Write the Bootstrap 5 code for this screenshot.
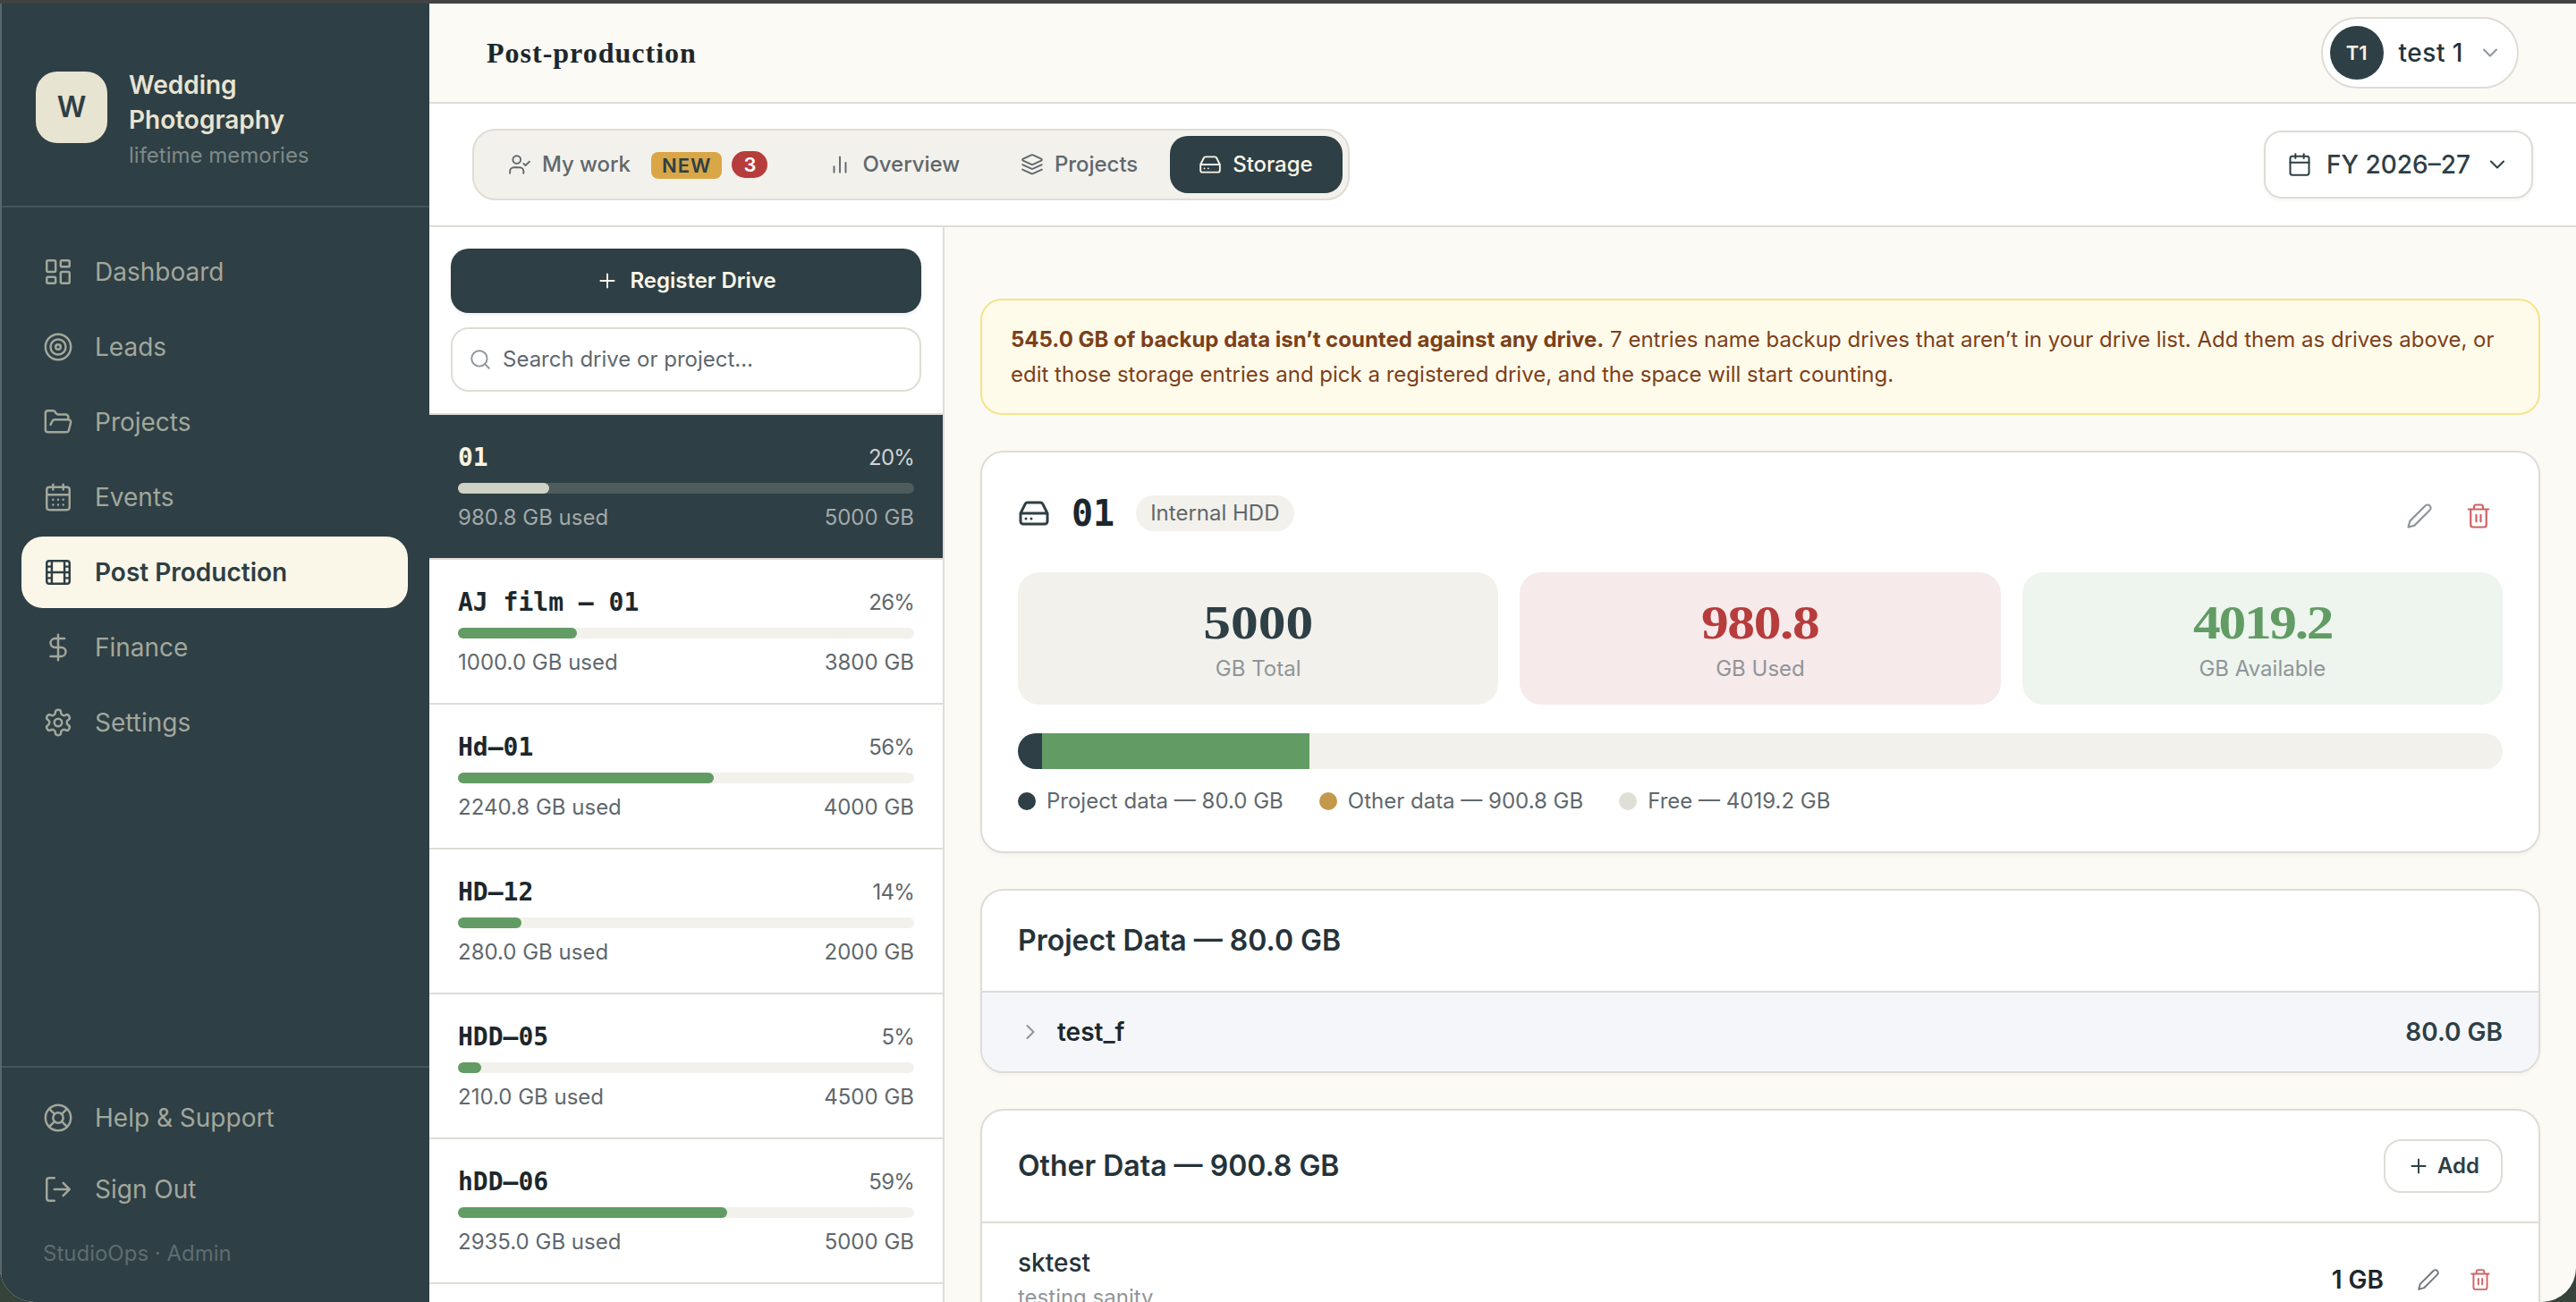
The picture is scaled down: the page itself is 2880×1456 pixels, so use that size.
<!DOCTYPE html>
<html lang="en">
<head>
  <meta charset="UTF-8">
  <title>Post-production</title>
  <link href="https://cdn.jsdelivr.net/npm/bootstrap@5.3.0/dist/css/bootstrap.min.css" rel="stylesheet" />
  <style>
    :root {
      --ink: #2e3f45;
      --line: #dfdcd6;
      --cream: #fbfaf5;
      --sand: #f3f1eb;
      --green: #629c64;
      --red: #b73c3c;
    }
    body { font-family: Inter, "Liberation Sans", sans-serif; font-size: 24px; line-height: 36px; color: #5f686d; background: #36433a; height: 1456px; overflow: hidden; }
    svg { fill: none; stroke: currentColor; stroke-width: 1.75; stroke-linecap: round; stroke-linejoin: round; flex: none; }
    .i26 { width: 26px; height: 26px; }
    .i28 { width: 28px; height: 28px; }
    .i30 { width: 30px; height: 30px; }
    .i34 { width: 34px; height: 34px; }
    .i36 { width: 36px; height: 36px; stroke-width: 2; }
    .window { height: 1456px; border-top: 4px solid #434343; border-radius: 0 0 38px 38px; background: var(--cream); }
    .mono { font-family: "DejaVu Sans Mono", monospace; font-weight: 700; }
    .serif { font-family: "Liberation Serif", serif; font-weight: 700; }
    .fs28 { font-size: 28px; }
    .tone-ink { color: var(--ink); }
    .tone-red { color: #cf6263; }

    /* sidebar */
    .side { width: 480px; background: var(--ink); border-left: 2px solid #5a686d; color: #a2a79c; }
    .brand { height: 228px; padding: 72px 38px 0; border-bottom: 2px solid #47565a; }
    .brand-logo { width: 80px; height: 80px; margin-top: 4px; border-radius: 24px; background: #e8e4d2; color: var(--ink); font-size: 32px; font-weight: 600; }
    .brand-name { font-size: 28px; line-height: 39px; font-weight: 600; color: #e8e4d2; }
    .brand-sub { color: #7f8a88; line-height: 39px; }
    .menu { padding: 32px 24px 0 22px; gap: 4px; }
    .menu a, .foot a { height: 80px; padding: 0 24px; gap: 24px; font-size: 28px; color: inherit; text-decoration: none; border-radius: 24px; }
    .menu a.active { background: #fbf7e8; color: var(--ink); font-weight: 600; }
    .foot { height: 264px; padding: 16px 22px 0; border-top: 2px solid #47565a; }
    .foot small { font-size: 24px; color: #5f6d6f; padding: 14px 24px 0; }

    /* top bar and tabs */
    .topbar { height: 112px; padding: 0 64px; border-bottom: 2px solid var(--line); }
    .page-title { font-size: 32px; letter-spacing: 1px; color: #1c272c; margin: 0; }
    .user { height: 80px; padding: 0 16px 0 8px; gap: 16px; border: 2px solid var(--line); border-radius: 40px; background: #fff; color: #8f9599; }
    .user b { width: 60px; height: 60px; border-radius: 50%; background: var(--ink); color: #fbf3e0; font-size: 22px; font-weight: 600; }
    .user-name { letter-spacing: .5px; padding-left: 1px; color: #25333a; }
    .tabs-row { height: 138px; padding: 0 48px; border-bottom: 2px solid var(--line); background: #fff; }
    .tabs { height: 80px; padding: 6px; gap: 4px; border: 2px solid var(--line); border-radius: 26px; background: var(--sand); }
    .tabs a { height: 64px; padding: 0 32px; gap: 12px; font-weight: 500; letter-spacing: -.05px; color: #5f686d; text-decoration: none; border-radius: 20px; }
    .tabs a.active { padding-right: 33px; background: var(--ink); color: #fbf7e8; }
    .tag-new, .tag-count { height: 30px; line-height: 30px; font-size: 22px; font-weight: 600; }
    .tag-new { margin: 2px 0 0 11px; padding: 0 12px; border-radius: 8px; background: #d9a648; color: var(--ink); letter-spacing: 1px; }
    .tag-count { width: 40px; margin-left: -1px; border-radius: 15px; background: var(--red); color: #fff; text-align: center; }
    .year { height: 76px; padding: 0 24px; gap: 16px; border: 2px solid var(--line); border-radius: 20px; background: #fff; color: var(--ink); font-size: 28px; font-weight: 500; box-shadow: 0 2px 4px rgba(0,0,0,.05); }

    /* drive list */
    .main-row { min-height: 0; }
    .drives { width: 576px; background: #fff; border-right: 2px solid var(--line); }
    .drives-top { padding: 24px; gap: 16px; border-bottom: 2px solid var(--line); }
    .register { height: 72px; gap: 12px; border: 0; border-radius: 20px; background: var(--ink); color: #fbf7e8; font-size: 24px; font-weight: 600; box-shadow: 0 2px 4px rgba(0,0,0,.08); }
    .search { height: 72px; padding: 0 18px; gap: 12px; border: 2px solid var(--line); border-radius: 20px; color: #8f9599; }
    .search-text { color: #5f686d; }
    .drive { height: 162px; padding: 28px 32px 0; border-bottom: 2px solid var(--line); }
    .drive .mono { font-size: 28px; line-height: 40px; color: #1c272c; }
    .pct { letter-spacing: -.8px; }
    .bar { height: 12px; margin: 8px 0 9px; border-radius: 6px; background: var(--sand); }
    .bar div { height: 12px; border-radius: 6px; background: var(--green); }
    .drive.active { background: var(--ink); color: #a2a9aa; }
    .drive.active .mono { color: #fbf3e0; }
    .drive.active .pct { color: #d0d3d2; }
    .drive.active .bar { background: #4e5c5d; }
    .drive.active .bar div { background: #cfd2c4; }

    /* selected drive */
    .content { padding: 80px 40px 0; gap: 40px; }
    .notice { padding: 24px 32px; border: 2px solid #f6e389; border-radius: 24px; background: #fffbeb; color: #7c4019; line-height: 39px; }
    .panel { border: 2px solid var(--line); border-radius: 26px; background: #fff; box-shadow: 0 2px 4px rgba(0,0,0,.04); overflow: hidden; flex: none; }
    .drive-panel { height: 450px; padding: 40px; }
    .drive-head { height: 94px; gap: 24px; }
    .drive-head > div { height: 56px; }
    .drive-title { font-size: 40px; color: #1c272c; }
    .kind { height: 40px; line-height: 40px; padding: 0 16px; border-radius: 20px; background: var(--sand); }
    .drive-head .tools-lg { height: 62px; padding: 0 12px; gap: 36px; color: #8f9599; }
    .tools-sm { gap: 32px; padding: 0 12px 0 37px; color: #6f777b; }
    .stats { grid-template-columns: repeat(3, 1fr); gap: 24px; }
    .stat { height: 148px; padding-top: 28px; border-radius: 24px; text-align: center; color: #8f9599; }
    .stat .serif { font-size: 53px; line-height: 56px; height: 62px; transform: scaleX(1.16); }
    .stat-total { background: var(--sand); }
    .stat-total .serif { color: var(--ink); }
    .stat-used { background: #f7eaea; }
    .stat-used .serif { color: var(--red); letter-spacing: -1.2px; }
    .stat-free { background: #edf5ee; }
    .stat-free .serif { color: var(--green); letter-spacing: -2px; }
    .usage { height: 40px; margin: 32px 0 18px; border-radius: 20px; background: var(--sand); overflow: hidden; }
    .legend { gap: 40px; }
    .legend i { width: 20px; height: 20px; border-radius: 50%; margin-right: 12px; }
    .use-project, .dot-project { background: var(--ink); }
    .use-other { background: var(--green); }
    .dot-other { background: #c39a4b; }
    .dot-free { background: #dfded7; }
    .panel h2 { margin: 0; font-size: 32px; font-weight: 600; color: #25333a; }
    .panel-head { padding: 0 40px; border-bottom: 2px solid var(--line); }
    .head-project { height: 114px; }
    .head-other { height: 126px; }
    .project-row { height: 88px; padding: 0 40px; gap: 16px; background: #f5f6f9; font-weight: 600; color: #8f9599; }
    .row-name { font-weight: 600; color: #1c272c; }
    .add { height: 60px; padding: 0 24px; gap: 8px; border: 2px solid var(--line); border-radius: 20px; background: #fff; color: var(--ink); font-weight: 600; }
    .other-row { padding: 24px 40px; }
    .other-name { font-weight: 500; line-height: 41px; color: #25333a; }
    .other-note { color: #8f9599; }
  </style>
</head>
<body>
  <svg class="d-none">
    <symbol id="grid" viewBox="0 0 24 24"><rect x="3" y="3" width="7" height="9" rx="1"/><rect x="14" y="3" width="7" height="5" rx="1"/><rect x="14" y="12" width="7" height="9" rx="1"/><rect x="3" y="16" width="7" height="5" rx="1"/></symbol>
    <symbol id="target" viewBox="0 0 24 24"><circle cx="12" cy="12" r="10"/><circle cx="12" cy="12" r="6"/><circle cx="12" cy="12" r="2"/></symbol>
    <symbol id="folder" viewBox="0 0 24 24"><path d="m6 14 1.5-2.9A2 2 0 0 1 9.24 10H20a2 2 0 0 1 1.94 2.5l-1.54 6a2 2 0 0 1-1.95 1.5H4a2 2 0 0 1-2-2V5a2 2 0 0 1 2-2h3.9a2 2 0 0 1 1.69.9l.81 1.2a2 2 0 0 0 1.67.9H18a2 2 0 0 1 2 2v2"/></symbol>
    <symbol id="days" viewBox="0 0 24 24"><path d="M8 2v4M16 2v4M3 10h18M8 14h.01M12 14h.01M16 14h.01M8 18h.01M12 18h.01M16 18h.01"/><rect x="3" y="4" width="18" height="18" rx="2"/></symbol>
    <symbol id="film" viewBox="0 0 24 24"><rect x="3" y="3" width="18" height="18" rx="2"/><path d="M7 3v18M17 3v18M3 7.5h4M3 12h18M3 16.5h4M17 7.5h4M17 16.5h4"/></symbol>
    <symbol id="dollar" viewBox="0 0 24 24"><path d="M12 2v20M17 5H9.5a3.5 3.5 0 0 0 0 7h5a3.5 3.5 0 0 1 0 7H6"/></symbol>
    <symbol id="gear" viewBox="0 0 24 24"><path d="M12.22 2h-.44a2 2 0 0 0-2 2v.18a2 2 0 0 1-1 1.73l-.43.25a2 2 0 0 1-2 0l-.15-.08a2 2 0 0 0-2.73.73l-.22.38a2 2 0 0 0 .73 2.73l.15.1a2 2 0 0 1 1 1.72v.51a2 2 0 0 1-1 1.74l-.15.09a2 2 0 0 0-.73 2.73l.22.38a2 2 0 0 0 2.73.73l.15-.08a2 2 0 0 1 2 0l.43.25a2 2 0 0 1 1 1.73V20a2 2 0 0 0 2 2h.44a2 2 0 0 0 2-2v-.18a2 2 0 0 1 1-1.73l.43-.25a2 2 0 0 1 2 0l.15.08a2 2 0 0 0 2.73-.73l.22-.39a2 2 0 0 0-.73-2.73l-.15-.08a2 2 0 0 1-1-1.74v-.5a2 2 0 0 1 1-1.74l.15-.09a2 2 0 0 0 .73-2.73l-.22-.38a2 2 0 0 0-2.73-.73l-.15.08a2 2 0 0 1-2 0l-.43-.25a2 2 0 0 1-1-1.73V4a2 2 0 0 0-2-2z"/><circle cx="12" cy="12" r="3"/></symbol>
    <symbol id="buoy" viewBox="0 0 24 24"><circle cx="12" cy="12" r="10"/><circle cx="12" cy="12" r="4"/><path d="m4.93 4.93 4.24 4.24M14.83 9.17l4.24-4.24M14.83 14.83l4.24 4.24M9.17 14.83l-4.24 4.24"/></symbol>
    <symbol id="logout" viewBox="0 0 24 24"><path d="M9 21H5a2 2 0 0 1-2-2V5a2 2 0 0 1 2-2h4M16 17l5-5-5-5M21 12H9"/></symbol>
    <symbol id="user" viewBox="0 0 24 24"><path d="M16 21v-2a4 4 0 0 0-4-4H6a4 4 0 0 0-4 4v2"/><circle cx="9" cy="7" r="4"/><path d="m16 11 2 2 4-4"/></symbol>
    <symbol id="chart" viewBox="0 0 24 24"><path d="M18 20V10M12 20V4M6 20v-6"/></symbol>
    <symbol id="layers" viewBox="0 0 24 24"><path d="m12.83 2.18a2 2 0 0 0-1.66 0L2.6 6.08a1 1 0 0 0 0 1.83l8.58 3.91a2 2 0 0 0 1.66 0l8.58-3.9a1 1 0 0 0 0-1.83ZM22 12.15l-9.17 4.17a2 2 0 0 1-1.66 0L2 12.15M22 17.15l-9.17 4.17a2 2 0 0 1-1.66 0L2 17.15"/></symbol>
    <symbol id="hdd" viewBox="0 0 24 24"><path d="M22 12H2M5.45 5.11 2 12v6a2 2 0 0 0 2 2h16a2 2 0 0 0 2-2v-6l-3.45-6.89A2 2 0 0 0 16.76 4H7.24a2 2 0 0 0-1.79 1.11zM6 16h.01M10 16h.01"/></symbol>
    <symbol id="cal" viewBox="0 0 24 24"><path d="M8 2v4M16 2v4M3 10h18"/><rect x="3" y="4" width="18" height="18" rx="2"/></symbol>
    <symbol id="down" viewBox="0 0 24 24"><path d="m6 9 6 6 6-6"/></symbol>
    <symbol id="right" viewBox="0 0 24 24"><path d="m9 18 6-6-6-6"/></symbol>
    <symbol id="plus" viewBox="0 0 24 24"><path d="M5 12h14M12 5v14"/></symbol>
    <symbol id="find" viewBox="0 0 24 24"><circle cx="11" cy="11" r="8"/><path d="m21 21-4.3-4.3"/></symbol>
    <symbol id="pencil" viewBox="0 0 24 24"><path d="M17 3a2.85 2.83 0 1 1 4 4L7.5 20.5 2 22l1.5-5.5Z"/></symbol>
    <symbol id="trash" viewBox="0 0 24 24"><path d="M3 6h18M19 6v14a2 2 0 0 1-2 2H7a2 2 0 0 1-2-2V6M8 6V4a2 2 0 0 1 2-2h4a2 2 0 0 1 2 2v2M10 11v6M14 11v6"/></symbol>
  </svg>

  <div class="window d-flex overflow-hidden">
    <aside class="side d-flex flex-column flex-shrink-0">
      <div class="brand d-flex gap-4">
        <div class="brand-logo d-flex align-items-center justify-content-center">W</div>
        <div>
          <div class="brand-name">Wedding<br>Photography</div>
          <div class="brand-sub">lifetime memories</div>
        </div>
      </div>
      <nav class="menu d-flex flex-column flex-grow-1">
        <a href="#" class="d-flex align-items-center"><svg class="i34"><use href="#grid"/></svg>Dashboard</a>
        <a href="#" class="d-flex align-items-center"><svg class="i34"><use href="#target"/></svg>Leads</a>
        <a href="#" class="d-flex align-items-center"><svg class="i34"><use href="#folder"/></svg>Projects</a>
        <a href="#" class="d-flex align-items-center"><svg class="i34"><use href="#days"/></svg>Events</a>
        <a href="#" class="d-flex align-items-center active"><svg class="i34"><use href="#film"/></svg>Post Production</a>
        <a href="#" class="d-flex align-items-center"><svg class="i34"><use href="#dollar"/></svg>Finance</a>
        <a href="#" class="d-flex align-items-center"><svg class="i34"><use href="#gear"/></svg>Settings</a>
      </nav>
      <div class="foot d-flex flex-column">
        <a href="#" class="d-flex align-items-center"><svg class="i34"><use href="#buoy"/></svg>Help &amp; Support</a>
        <a href="#" class="d-flex align-items-center"><svg class="i34"><use href="#logout"/></svg>Sign Out</a>
        <small>StudioOps · Admin</small>
      </div>
    </aside>

    <div class="d-flex flex-column flex-grow-1">
      <header class="topbar d-flex align-items-center justify-content-between flex-shrink-0">
        <h1 class="page-title serif">Post-production</h1>
        <div class="user d-flex align-items-center">
          <b class="d-flex align-items-center justify-content-center">T1</b>
          <span class="user-name fs28 fw-medium">test 1</span>
          <svg class="i28"><use href="#down"/></svg>
        </div>
      </header>

      <div class="tabs-row d-flex align-items-center justify-content-between flex-shrink-0">
        <nav class="tabs d-flex">
          <a href="#" class="d-flex align-items-center"><svg class="i26"><use href="#user"/></svg>My work <span class="tag-new">NEW</span><span class="tag-count">3</span></a>
          <a href="#" class="d-flex align-items-center"><svg class="i26"><use href="#chart"/></svg>Overview</a>
          <a href="#" class="d-flex align-items-center"><svg class="i26"><use href="#layers"/></svg>Projects</a>
          <a href="#" class="d-flex align-items-center active"><svg class="i26"><use href="#hdd"/></svg>Storage</a>
        </nav>
        <div class="year d-flex align-items-center"><svg class="i28"><use href="#cal"/></svg>FY 2026–27<svg class="i28"><use href="#down"/></svg></div>
      </div>

      <div class="main-row d-flex flex-grow-1 overflow-hidden">
        <section class="drives flex-shrink-0">
          <div class="drives-top d-flex flex-column">
            <button class="register d-flex align-items-center justify-content-center"><svg class="i26"><use href="#plus"/></svg>Register Drive</button>
            <div class="search d-flex align-items-center"><svg class="i26"><use href="#find"/></svg><span class="search-text">Search drive or project…</span></div>
          </div>
          <div id="drive-list"></div>
        </section>

        <main class="content d-flex flex-column flex-grow-1">
          <div class="notice"><b class="fw-bold">545.0 GB of backup data isn’t counted against any drive.</b> 7 entries name backup drives that aren’t in your drive list. Add them as drives above, or edit those storage entries and pick a registered drive, and the space will start counting.</div>

          <section class="panel drive-panel">
            <div class="drive-head d-flex">
              <div class="d-flex align-items-center gap-4 flex-grow-1">
                <svg class="i36 tone-ink"><use href="#hdd"/></svg>
                <span class="mono drive-title">01</span>
                <span class="kind">Internal HDD</span>
              </div>
              <div class="tools-lg d-flex align-items-center"><svg class="i30"><use href="#pencil"/></svg><svg class="i30 tone-red"><use href="#trash"/></svg></div>
            </div>
            <div class="stats d-grid">
              <div class="stat stat-total"><div class="serif">5000</div>GB Total</div>
              <div class="stat stat-used"><div class="serif">980.8</div>GB Used</div>
              <div class="stat stat-free"><div class="serif">4019.2</div>GB Available</div>
            </div>
            <div class="usage d-flex">
              <div class="use-project" style="width: 1.6%"></div>
              <div class="use-other" style="width: 18.02%"></div>
            </div>
            <div class="legend d-flex">
              <span class="d-flex align-items-center"><i class="dot-project"></i>Project data — 80.0 GB</span>
              <span class="d-flex align-items-center"><i class="dot-other"></i>Other data — 900.8 GB</span>
              <span class="d-flex align-items-center"><i class="dot-free"></i>Free — 4019.2 GB</span>
            </div>
          </section>

          <section class="panel">
            <div class="panel-head head-project d-flex align-items-center"><h2>Project Data — 80.0 GB</h2></div>
            <div class="project-row fs28 d-flex align-items-center">
              <svg class="i28"><use href="#right"/></svg>
              <span class="flex-grow-1 row-name">test_f</span>
              <span class="tone-ink">80.0 GB</span>
            </div>
          </section>

          <section class="panel">
            <div class="panel-head head-other d-flex align-items-center justify-content-between">
              <h2>Other Data — 900.8 GB</h2>
              <button class="add d-flex align-items-center"><svg class="i26"><use href="#plus"/></svg>Add</button>
            </div>
            <div class="other-row d-flex align-items-center">
              <div class="flex-grow-1">
                <div class="other-name fs28">sktest</div>
                <div class="other-note">testing sanity</div>
              </div>
              <span class="row-name fs28">1 GB</span>
              <div class="tools-sm d-flex"><svg class="i26"><use href="#pencil"/></svg><svg class="i26 tone-red"><use href="#trash"/></svg></div>
            </div>
          </section>
        </main>
      </div>
    </div>
  </div>

  <script>
    const drives = [
      { name: '01', pct: 20, used: '980.8', total: 5000, active: true },
      { name: 'AJ film – 01', pct: 26, used: '1000.0', total: 3800 },
      { name: 'Hd–01', pct: 56, used: '2240.8', total: 4000 },
      { name: 'HD–12', pct: 14, used: '280.0', total: 2000 },
      { name: 'HDD–05', pct: 5, used: '210.0', total: 4500 },
      { name: 'hDD–06', pct: 59, used: '2935.0', total: 5000 },
    ];

    const list = document.getElementById('drive-list');
    drives.forEach(d => {
      list.innerHTML += `
        <div class="drive ${d.active ? 'active' : ''}">
          <div class="d-flex justify-content-between align-items-center"><span class="mono">${d.name}</span><span class="pct">${d.pct}%</span></div>
          <div class="bar"><div style="width: ${d.pct}%"></div></div>
          <div class="d-flex justify-content-between"><span>${d.used} GB used</span><span>${d.total} GB</span></div>
        </div>
      `;
    });
  </script>
  <script src="https://cdn.jsdelivr.net/npm/bootstrap@5.3.0/dist/js/bootstrap.bundle.min.js"></script>
</body>
</html>
